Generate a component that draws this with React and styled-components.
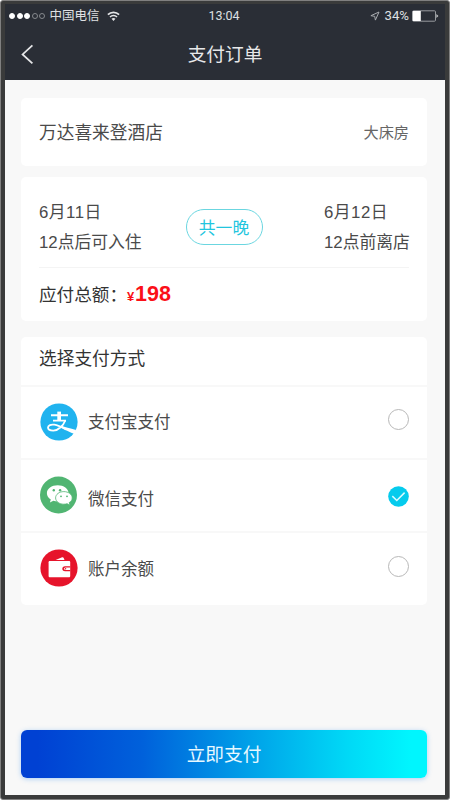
import React, { useState } from 'react';
import styled, { createGlobalStyle } from 'styled-components';

const METHODS = [
  { id: 'alipay', name: '支付宝支付', height: 73, offset: -1 },
  { id: 'wechat', name: '微信支付', height: 73, offset: 6 },
  { id: 'balance', name: '账户余额', height: 74, offset: 0 },
];

const WifiIcon = () => (
  <svg width="13" height="11" viewBox="0 0 13 11" fill="none" stroke="#e4e5e7">
    <path d="M.9 3.7C4 .5 9 .5 12.1 3.7" strokeWidth="1.7" />
    <path d="M3 6c2-2 5-2 7 0" strokeWidth="1.6" />
    <path d="M4.5 7.8c1.1-1 2.9-1 4 0l-2 2.2z" fill="#e4e5e7" stroke="none" />
  </svg>
);

const LocationIcon = () => (
  <svg width="10" height="10" viewBox="0 0 10 10" fill="none" stroke="#a9acb0">
    <path d="M9 1L.9 4.7l3.8.6.7 3.8z" strokeWidth="1" strokeLinejoin="round" />
  </svg>
);

const BatteryIcon = () => (
  <svg width="27" height="12" viewBox="0 0 27 12">
    <rect x=".5" y=".8" width="23" height="10.4" rx="1" fill="none" stroke="#999ca0" />
    <path d="M.8 1h8v10h-8z" fill="#fff" />
    <path d="M24.4 4l2 2-2 2z" fill="#c4c6c8" />
  </svg>
);

const BackIcon = () => (
  <svg width="13" height="21" viewBox="0 0 13 21" fill="none" stroke="#e3e4e6">
    <path d="M11.4 1.3L1.6 10.4l9.8 9" strokeWidth="1.8" />
  </svg>
);

const AlipayIcon = () => (
  <svg width="38" height="38" viewBox="0 0 38 38" fill="none" stroke="#fff">
    <circle cx="19" cy="19" r="18.6" fill="#20b3ef" stroke="none" />
    <path d="M11 12.3h17M13 17.6h13" strokeWidth="1.9" />
    <path d="M17.3 8.6h3.7v9h-3.7z" fill="#fff" stroke="none" />
    <path
      d="M25.3 17.5c-1.8 4.5-6.7 10.1-12 10.1-3.3 0-5.3-1.1-5.3-3 0-2.3 3-3.5 6.3-2.9 4.2.8 8.3 3 12.2 5"
      strokeWidth="1.8"
    />
    <path d="M21.2 22.5c3.5 1.5 9 3.1 14.8 4.4l-1.3 4.1c-4.5-1.3-9.6-3.9-14.4-6.9z" fill="#fff" stroke="none" />
  </svg>
);

const WechatIcon = () => (
  <svg width="38" height="38" viewBox="0 0 38 38" fill="#fff">
    <circle cx="18.5" cy="19" r="18.5" fill="#51b572" />
    <path d="M17.7 9.3c-6 0-10.8 3.4-10.8 7.9 0 2.6 1.4 4.8 3.9 6.2l-.9 3.1 3.5-1.8c1.3.4 2.7.6 4.3.6 6 0 10.8-3.6 10.8-8.1s-4.8-7.9-10.8-7.9z" />
    <path
      d="M23.8 15.6c-4.6 0-8.2 2.8-8.2 6.3s3.6 6.3 8.2 6.3c1.2 0 2.3-.2 3.3-.5l2.9 1.5-.8-2.6c1.9-1.1 3-2.8 3-4.7 0-3.5-3.8-6.3-8.4-6.3z"
      stroke="#51b572"
      strokeWidth=".8"
    />
    <g fill="#51b572">
      <circle cx="13.8" cy="14.2" r="1.2" />
      <circle cx="20.1" cy="14.2" r="1.2" />
      <circle cx="21" cy="20.3" r=".9" />
      <circle cx="27" cy="20.3" r=".9" />
    </g>
  </svg>
);

const WalletIcon = () => (
  <svg width="38" height="38" viewBox="0 0 38 38" fill="#fff">
    <circle cx="19" cy="19" r="18.6" fill="#e6142b" />
    <path d="M15.6 11l6.5-2.7c.7-.3 1.3 0 1.6.7l.8 2z" />
    <path d="M10 12h18.9c.8 0 1.3.5 1.3 1.3v13.6c0 .9-.5 1.4-1.3 1.4H10c-.9 0-1.4-.5-1.4-1.4V13.3c0-.8.5-1.3 1.4-1.3z" />
    <path d="M30.3 17.3h-5.2c-3.7 0-3.7 5 0 5h5.2v-1.3h-5c-1.7 0-1.7-2.4 0-2.4h5z" fill="#e6142b" />
    <circle cx="25.6" cy="19.8" r=".7" fill="#e6142b" />
  </svg>
);

const CheckIcon = () => (
  <svg width="21" height="21" viewBox="0 0 21 21" fill="none">
    <circle cx="10.5" cy="10.5" r="10.3" fill="#05cbed" />
    <path d="M4.3 10.1l4.5 4.4 7.8-7.9" stroke="#d9faff" strokeWidth="1.5" />
  </svg>
);

const ICONS = { alipay: AlipayIcon, wechat: WechatIcon, balance: WalletIcon };

export default function App() {
  const [selected, setSelected] = useState('wechat');

  return (
    <Phone>
      <GlobalStyle />
      <StatusBar>
        <Carrier>
          <Signal>
            {[1, 2, 3, 4, 5].map(n => (
              <Dot key={n} $on={n <= 3} />
            ))}
          </Signal>
          <span>中国电信</span>
          <WifiIcon />
        </Carrier>
        <Clock>13:04</Clock>
        <Power>
          <LocationIcon />
          <span>34%</span>
          <BatteryIcon />
        </Power>
      </StatusBar>
      <NavBar>
        <BackButton aria-label="返回">
          <BackIcon />
        </BackButton>
        <Title>支付订单</Title>
      </NavBar>
      <Content>
        <HotelCard>
          <HotelName>万达喜来登酒店</HotelName>
          <RoomType>大床房</RoomType>
        </HotelCard>
        <StayCard>
          <Stay>
            <StayInfo>
              <StayDate>6月11日</StayDate>
              <div>12点后可入住</div>
            </StayInfo>
            <Nights>共一晚</Nights>
            <StayInfo $end>
              <StayDate>6月12日</StayDate>
              <div>12点前离店</div>
            </StayInfo>
          </Stay>
          <Total>
            应付总额：
            <Currency>¥</Currency>
            <Price>198</Price>
          </Total>
        </StayCard>
        <MethodCard>
          <MethodTitle>选择支付方式</MethodTitle>
          {METHODS.map(({ id, name, height, offset }) => {
            const Icon = ICONS[id];
            return (
              <Method key={id} $height={height} onClick={() => setSelected(id)}>
                <Icon />
                <MethodName $offset={offset}>{name}</MethodName>
                <Radio $low={id === 'wechat'}>
                  {selected === id ? <CheckIcon /> : <Circle />}
                </Radio>
              </Method>
            );
          })}
        </MethodCard>
        <PayButton>立即支付</PayButton>
      </Content>
    </Phone>
  );
}

const GlobalStyle = createGlobalStyle`
  * {
    box-sizing: border-box;
  }
  body {
    margin: 0;
    background: #fff;
    font-family: 'Liberation Sans', 'Noto Sans CJK SC', sans-serif;
  }
  button {
    border: 0;
    padding: 0;
    font-family: inherit;
  }
  svg {
    display: block;
    flex: none;
  }
`;

const Phone = styled.div`
  display: flex;
  flex-direction: column;
  width: 450px;
  height: 800px;
  padding: 3px 4px 4px;
  border: 1px solid #808080;
  border-radius: 3px;
  background: #3a3b3b;
  overflow: hidden;
`;

const StatusBar = styled.div`
  display: grid;
  grid-template-columns: 1fr auto 1fr;
  align-items: center;
  height: 24px;
  padding: 0 6px 0 4px;
  background: #2a2e36;
  color: #dfe0e2;
  font-size: 12px;
  line-height: 24px;
`;

const Carrier = styled.div`
  display: flex;
  align-items: center;
  font-size: 12.5px;

  svg {
    margin-left: 8px;
  }
`;

const Signal = styled.div`
  display: flex;
  gap: 1.6px;
  margin-right: 4px;
`;

const Dot = styled.i`
  width: 6px;
  height: 6px;
  border: 1px solid ${props => (props.$on ? '#fff' : '#85888d')};
  border-radius: 50%;
  background: ${props => (props.$on ? '#fff' : 'transparent')};
`;

const Clock = styled.div`
  font-family: Roboto, sans-serif;
  font-size: 12.5px;
`;

const Power = styled.div`
  display: flex;
  align-items: center;
  justify-content: flex-end;
  font-family: Roboto, sans-serif;
  font-size: 13.2px;

  span {
    margin: 0 3px 0 5px;
  }
`;

const NavBar = styled.div`
  display: grid;
  grid-template-columns: 60px 1fr 60px;
  align-items: center;
  height: 52px;
  background: #2a2e36;
`;

const BackButton = styled.button`
  padding-left: 16px;
  background: none;
`;

const Title = styled.div`
  padding-top: 2px;
  color: #e7e8e9;
  font-size: 18.7px;
  line-height: 50px;
  text-align: center;
`;

const Content = styled.div`
  flex: 1;
  display: flex;
  flex-direction: column;
  padding: 18px 18px 17px 16px;
  background: #f8f8f8;
`;

const Card = styled.section`
  flex: none;
  border-radius: 5px;
  background: #fff;
  color: #4a4a4a;
`;

const HotelCard = styled(Card)`
  display: flex;
  align-items: center;
  justify-content: space-between;
  height: 68px;
  padding: 0 18px 2px;
`;

const HotelName = styled.div`
  font-size: 17.7px;
`;

const RoomType = styled.div`
  color: #666;
  font-size: 15.2px;
`;

const StayCard = styled(Card)`
  height: 144px;
  margin-top: 11px;
  padding: 0 18px;
`;

const Stay = styled.div`
  display: flex;
  justify-content: space-between;
  height: 91px;
  padding-top: 21px;
  border-bottom: 1px solid #f4f4f4;
`;

const StayInfo = styled.div`
  width: ${props => (props.$end ? 85 : 110)}px;
  font-size: 16.8px;
  line-height: 30px;
  white-space: nowrap;
`;

const StayDate = styled.div`
  letter-spacing: 0.5px;
`;

const Nights = styled.div`
  width: 77px;
  height: 36px;
  margin: 11px 25px 0 0;
  border: 1px solid #6bd6e0;
  border-radius: 18px;
  color: #22c5de;
  font-size: 16.8px;
  line-height: 37px;
  text-align: center;
`;

const Total = styled.div`
  display: flex;
  align-items: baseline;
  color: #333;
  font-size: 17.6px;
  line-height: 53px;
`;

const Currency = styled.span`
  width: 8px;
  color: #fb1018;
  font-size: 13px;
  font-weight: bold;
`;

const Price = styled.span`
  color: #fb1018;
  font-size: 21.5px;
  font-weight: bold;
`;

const MethodCard = styled(Card)`
  height: 268px;
  margin-top: 16px;
`;

const MethodTitle = styled.div`
  height: 48px;
  padding-left: 18px;
  color: #333;
  font-size: 17.7px;
  line-height: 45px;
`;

const Method = styled.div`
  display: flex;
  align-items: center;
  height: ${props => props.$height}px;
  padding: 0 18px 2px 19px;
  border-top: 2px solid #f8f8f8;
  cursor: pointer;
`;

const MethodName = styled.div`
  flex: 1;
  margin: ${props => props.$offset}px 0 0 10px;
  font-size: 16.5px;
`;

const Radio = styled.div`
  margin-top: ${props => (props.$low ? 4 : -4)}px;
`;

const Circle = styled.div`
  width: 21px;
  height: 21px;
  border: 1.5px solid #b8b8b8;
  border-radius: 50%;
`;

const PayButton = styled.button`
  flex: none;
  height: 48px;
  margin-top: auto;
  padding-bottom: 3px;
  border-radius: 6px;
  background: linear-gradient(90deg, #0041d3 4%, #0061db 30%, #00a0e8 56%, #00d8f6 80%, #00f6fe 96%);
  box-shadow: 0 1px 5px rgba(30, 130, 235, 0.35);
  color: #e6f8ff;
  font-size: 18.7px;
  cursor: pointer;
`;
